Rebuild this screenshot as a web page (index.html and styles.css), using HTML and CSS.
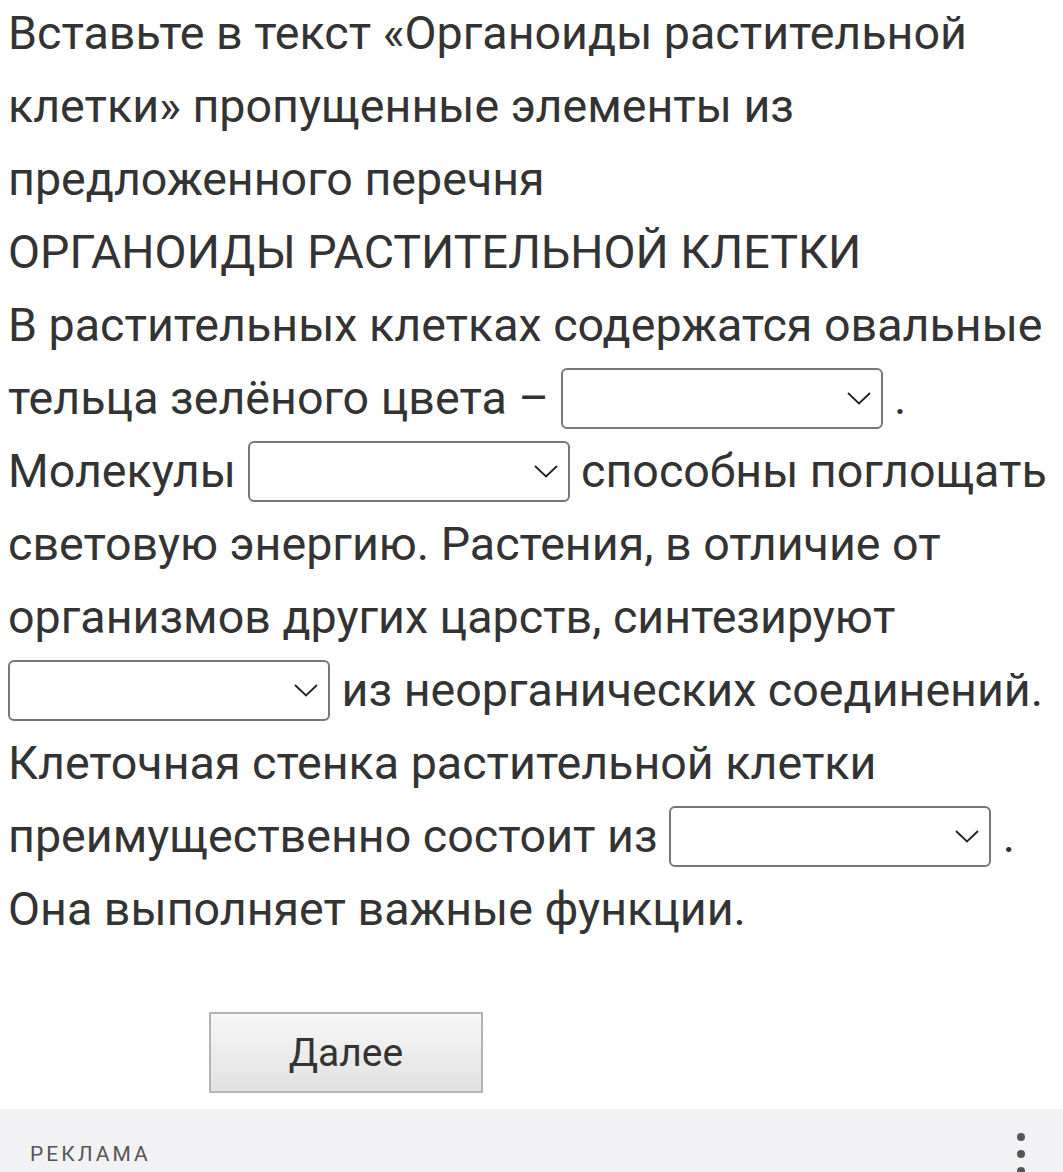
FILE: index.html
```html
<!DOCTYPE html>
<html lang="ru">
<head>
<meta charset="utf-8">
<link rel="stylesheet" href="styles.css">
</head>
<body>
<div class="task">
  <p class="text">Вставьте в текст «Органоиды растительной клетки» пропущенные элементы из предложенного перечня<br>ОРГАНОИДЫ РАСТИТЕЛЬНОЙ КЛЕТКИ<br>В растительных клетках содержатся овальные тельца зелёного цвета – <span class="sel"><svg class="chev" viewBox="0 0 24 13" width="24" height="13"><path d="M1 1 L12 11.5 L23 1" fill="none" stroke="#222" stroke-width="1.8"/></svg></span> . Молекулы <span class="sel"><svg class="chev" viewBox="0 0 24 13" width="24" height="13"><path d="M1 1 L12 11.5 L23 1" fill="none" stroke="#222" stroke-width="1.8"/></svg></span> способны поглощать световую энергию. Растения, в отличие от организмов других царств, синтезируют <span class="sel"><svg class="chev" viewBox="0 0 24 13" width="24" height="13"><path d="M1 1 L12 11.5 L23 1" fill="none" stroke="#222" stroke-width="1.8"/></svg></span> из неорганических соединений. Клеточная стенка растительной клетки преимущественно состоит из <span class="sel"><svg class="chev" viewBox="0 0 24 13" width="24" height="13"><path d="M1 1 L12 11.5 L23 1" fill="none" stroke="#222" stroke-width="1.8"/></svg></span> . Она выполняет важные функции.</p>
  <div class="actions"><button class="next" type="button">Далее</button></div>
</div>
<div class="ad">
  <span class="ad-label">РЕКЛАМА</span>
  <span class="dots"><i></i><i></i><i></i></span>
</div>
</body>
</html>
```
FILE: styles.css
```css
html, body {
  margin: 0;
  padding: 0;
  background: #fff;
}
body {
  font-family: Roboto, "Liberation Sans", sans-serif;
  color: #333;
  overflow: hidden;
  height: 1172px;
}
.task {
  padding: 0 8px 0 8px;
}
.text {
  margin: -3px 0 0 0;
  font-size: 46.6px;
  line-height: 73px;
}
.sel {
  display: inline-flex;
  align-items: center;
  justify-content: flex-end;
  box-sizing: border-box;
  width: 322px;
  height: 61px;
  border: 2px solid #777;
  border-radius: 6px;
  padding-right: 10px;
  vertical-align: middle;
  position: relative;
  top: -3px;
  background: #fff;
}
.chev {
  display: block;
}
.actions {
  padding: 66px 0 0 201px;
}
.next {
  width: 274px;
  height: 81px;
  border: 2px solid #b4b4b4;
  background: linear-gradient(#f7f7f7, #e2e2e2);
  font-family: Roboto, "Liberation Sans", sans-serif;
  font-size: 39px;
  color: #333;
  padding: 0;
  margin: 0;
  display: block;
}
.ad {
  margin-top: 16px;
  background: #f2f2f4;
  height: 80px;
  display: flex;
  align-items: flex-start;
  justify-content: space-between;
  padding: 0 38px 0 30px;
}
.ad-label {
  font-size: 21px;
  letter-spacing: 3px;
  color: #555;
  margin-top: 33px;
}
.dots {
  display: flex;
  flex-direction: column;
  gap: 9px;
  margin-top: 24px;
}
.dots i {
  display: block;
  width: 8px;
  height: 8px;
  border-radius: 50%;
  background: #555;
}
```
